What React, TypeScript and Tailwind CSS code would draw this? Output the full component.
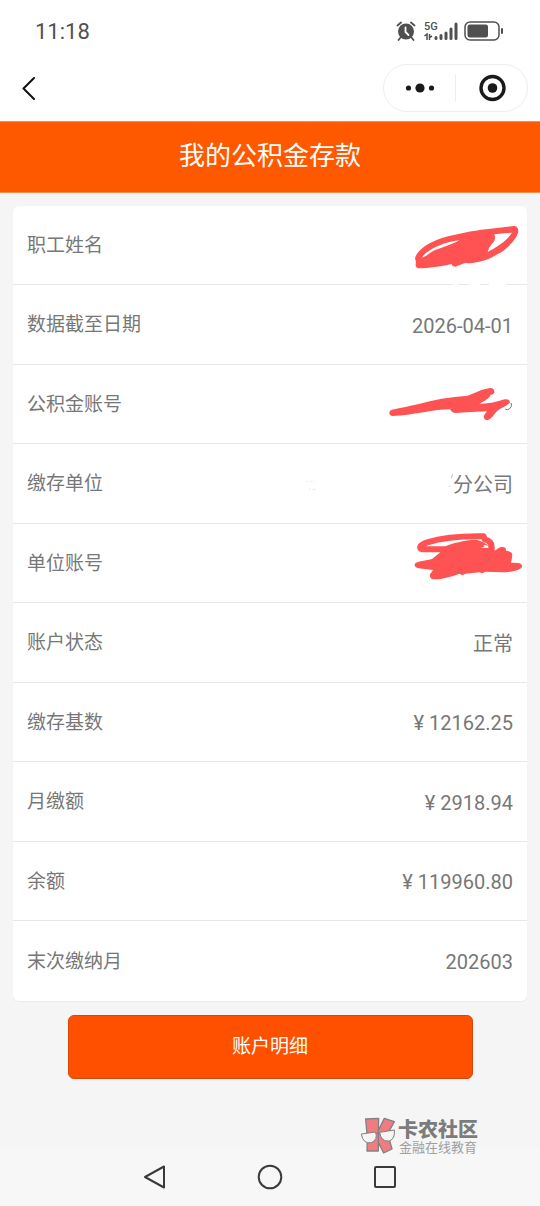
import type { ReactNode } from "react";

type Row = {
  label: string;
  value?: string;
  mark?: ReactNode;
};

const NameMark = () => (
  <svg
    className="absolute right-0 top-0 z-10 h-[85px] w-[140px]"
    viewBox="21 -12 420 255"
    aria-hidden="true"
  >
    <path
      fill="#ff5252"
      fillRule="evenodd"
      d="M105 145C110 122 142 99 186 84C226 73 280 62 318 58L400 48C410 47 416 55 415 66C408 91 378 120 352 133C326 149 292 162 255 159L226 170Q217 171 215 162C181 170 145 174 117 175Q106 174 107 162Q109 155 105 145ZM126 143C149 135 148 124 183 114C204 106 222 101 238 91C207 94 176 105 151 120Q133 130 126 143ZM343 73Q350 89 335 103Q326 112 323 126C352 110 381 92 396 68Z"
    />
    <path
      stroke="#fff"
      strokeWidth="8"
      strokeLinecap="round"
      d="M222 223h7M273 223h24M331 223h42"
    />
  </svg>
);

const AccountMark = () => (
  <svg
    className="absolute right-0 top-0 h-20 w-[140px]"
    viewBox="21 -15 420 240"
    aria-hidden="true"
  >
    <path
      fill="#ff5252"
      d="M36 119C93 108 136 96 185 86Q226 80 262 77C286 70 304 56 333 54Q344 56 343 68Q340 75 332 74Q330 85 298 101C323 102 347 97 374 88Q388 85 390 97Q387 104 359 117C343 127 338 148 320 151Q308 146 313 134L321 124Q275 126 225 129Q214 127 210 118C155 119 98 136 38 138Q28 136 28 128Q28 121 36 119Z"
    />
    <path
      fill="none"
      stroke="#777"
      strokeWidth="3"
      d="M394 99Q397 111 388 117Q382 121 376 118"
    />
  </svg>
);

const CompanyMark = () => (
  <svg
    className="absolute right-0 top-0 h-[79px] w-60"
    viewBox="-9 -45 720 237"
    aria-hidden="true"
  >
    <path
      fill="none"
      stroke="#ddd"
      strokeWidth="2"
      d="M48 67h4M60 67h4M70 68h4M58 91h5M68 91h8"
    />
    <path
      fill="none"
      stroke="#bbb"
      strokeWidth="3"
      d="M488 46L484 57M478 82h3"
    />
  </svg>
);

const CompanyAccountMark = () => (
  <svg
    className="absolute right-0 top-0 h-20 w-[140px]"
    viewBox="-39 12 420 240"
    aria-hidden="true"
  >
    <path
      fill="#ff5252"
      d="M44 133C47 124 73 123 96 117L121 97L118 84L132 80C157 69 193 61 225 59C250 62 270 78 284 92L300 82Q319 78 318 92L326 94Q337 97 337 107L333 128L356 129Q367 131 366 141C360 151 334 157 306 157L256 155L247 160L238 157L196 161L187 166L179 161C154 169 127 179 99 178Q88 174 90 163L99 150L56 145Q43 142 44 133Z"
    />
    <path
      fill="none"
      stroke="#ff5252"
      strokeWidth="18"
      strokeLinecap="round"
      strokeLinejoin="round"
      d="M130 88H68C52 86 62 73 82 67C130 52 190 48 251 49L254 58Q275 63 275 80V95"
    />
    <path
      fill="#fff"
      d="M240 83L265 84Q267 73 250 75L254 78Q248 83 240 83Z"
    />
    <path fill="#a66" d="M269 112L260 123L267 122Z" />
  </svg>
);

const rows: Row[] = [
  { label: "职工姓名", mark: <NameMark /> },
  { label: "数据截至日期", value: "2026-04-01" },
  { label: "公积金账号", mark: <AccountMark /> },
  { label: "缴存单位", value: "分公司", mark: <CompanyMark /> },
  { label: "单位账号", mark: <CompanyAccountMark /> },
  { label: "账户状态", value: "正常" },
  { label: "缴存基数", value: "¥ 12162.25" },
  { label: "月缴额", value: "¥ 2918.94" },
  { label: "余额", value: "¥ 119960.80" },
  { label: "末次缴纳月", value: "202603" },
];

const StatusBar = () => (
  <div className="flex h-16 items-center justify-between pb-[2px] pl-[35px] pr-9 text-[22px] text-[#505050]">
    <span>11:18</span>
    <div className="flex items-center">
      <svg
        className="mr-2 h-5 w-5"
        viewBox="0 0 20 20"
        fill="none"
        aria-label="闹钟"
      >
        <circle cx="10" cy="10.5" r="8" fill="#505050" />
        <path
          stroke="#505050"
          strokeWidth="1.8"
          strokeLinecap="round"
          d="M1.5 4.5L5 1.5M18.5 4.5L15 1.5M4.5 16.5L2.5 19M15.5 16.5L17.5 19"
        />
        <path
          stroke="#fff"
          strokeWidth="1.8"
          strokeLinecap="round"
          strokeLinejoin="round"
          d="M9.5 6.5v4.5l3 3"
        />
      </svg>
      <div className="relative mr-[6px] h-5 w-[34px]">
        <span className="absolute left-0 top-0 text-[11px] font-medium leading-[11px]">
          5G
        </span>
        <svg className="h-5 w-[34px]" viewBox="0 0 34 20" aria-label="信号">
          <path
            stroke="#505050"
            strokeWidth="3"
            strokeLinecap="round"
            d="M12 16.5v1M17 14.5v3M22 12v5.5M27 8v9.5M32 3v14.5"
          />
          <path
            fill="none"
            stroke="#505050"
            strokeWidth="1.5"
            d="M.5 15L3 13v6M5.5 13v6M5.5 16.5L8 15"
          />
        </svg>
      </div>
      <svg
        className="h-5 w-10"
        viewBox="0 0 40 20"
        fill="none"
        aria-label="电量"
      >
        <rect
          x="1"
          y="1"
          width="34"
          height="18"
          rx="5"
          stroke="#505050"
          strokeWidth="1.5"
        />
        <rect x="3.5" y="3.5" width="20.5" height="13" rx="2.5" fill="#505050" />
        <path
          stroke="#505050"
          strokeWidth="2"
          strokeLinecap="round"
          d="M38 8v4"
        />
      </svg>
    </div>
  </div>
);

const NavBar = () => (
  <div className="flex items-center justify-between pb-[9px] pl-[18px] pr-3">
    <button type="button" aria-label="返回">
      <svg className="h-6 w-6" viewBox="0 0 24 24" fill="none">
        <path
          stroke="#111"
          strokeWidth="2"
          strokeLinecap="round"
          strokeLinejoin="round"
          d="M16 2L5.5 12.5L16 23"
        />
      </svg>
    </button>
    <div className="flex h-12 w-[145px] items-center rounded-full border border-[#eee]">
      <button
        type="button"
        aria-label="更多"
        className="flex flex-1 justify-center"
      >
        <svg className="h-3 w-8" viewBox="0 0 32 12" fill="#1a1a1a">
          <circle cx="4.5" cy="6" r="2.6" />
          <circle cx="16" cy="6" r="4.6" />
          <circle cx="27.5" cy="6" r="2.6" />
        </svg>
      </button>
      <div className="h-7 w-px bg-[#eee]" />
      <button
        type="button"
        aria-label="关闭"
        className="flex flex-1 justify-center"
      >
        <svg className="h-7 w-7" viewBox="0 0 28 28" fill="none">
          <circle cx="14.5" cy="14" r="11.5" stroke="#1a1a1a" strokeWidth="3.4" />
          <circle cx="14.5" cy="14" r="4.8" fill="#1a1a1a" />
        </svg>
      </button>
    </div>
  </div>
);

const Watermark = () => (
  <div className="pointer-events-none absolute bottom-[51px] right-[62px] flex items-center gap-[2px]">
    <svg className="h-[38px] w-9" viewBox="28 38 108 114" aria-hidden="true">
      <g
        fill="#ef7d80"
        stroke="#858080"
        strokeWidth="4"
        strokeLinejoin="round"
      >
        <path d="M45 44L84 42L83 78L101 42L131 52L111 88L124 134L99 146L83 114L83 140L49 140L50 100Z" />
        <path fill="none" d="M83 78V114" />
      </g>
      <g fill="#f5f5f5" stroke="#858080" strokeWidth="3">
        <path d="M32 89L75 83Q82 107 62 115Q37 120 32 89Z" />
        <path d="M87 84L131 77Q134 103 116 110Q91 113 87 84Z" />
        <path fill="none" d="M75 88Q81 84 87 88" />
      </g>
    </svg>
    <div className="flex flex-col">
      <span className="text-[20px] font-black leading-[22px] text-[#7c7c7c]">
        卡农社区
      </span>
      <span className="pl-px text-[13px] leading-[13px] text-[#a0a0a0]">
        金融在线教育
      </span>
    </div>
  </div>
);

const SystemNav = () => (
  <nav className="flex h-[58px] items-center justify-center gap-[87px] bg-[#f7f7f7]">
    <button type="button" aria-label="返回上一页">
      <svg className="h-7 w-7" viewBox="0 0 28 28" fill="none">
        <path
          stroke="#3a3a3a"
          strokeWidth="2"
          strokeLinejoin="round"
          d="M23 3.5V24.5L4 14Z"
        />
      </svg>
    </button>
    <button type="button" aria-label="主屏幕">
      <svg className="h-7 w-7" viewBox="0 0 28 28" fill="none">
        <circle cx="14" cy="14" r="11.3" stroke="#3a3a3a" strokeWidth="2" />
      </svg>
    </button>
    <button type="button" aria-label="最近任务">
      <svg className="h-7 w-7" viewBox="0 0 28 28" fill="none">
        <rect
          x="4"
          y="4"
          width="20"
          height="20"
          rx="1"
          stroke="#3a3a3a"
          strokeWidth="2"
        />
      </svg>
    </button>
  </nav>
);

export default function App() {
  return (
    <div className="relative flex min-h-screen flex-col bg-[#f5f5f5] font-[Roboto,'Noto_Sans_CJK_SC',sans-serif]">
      <header className="bg-white">
        <StatusBar />
        <NavBar />
      </header>
      <h1 className="flex h-[72px] items-center justify-center border-y border-[#ff8a4d] bg-[#ff5900] pb-[2px] text-[26px] text-white">
        我的公积金存款
      </h1>
      <main className="flex flex-1 flex-col px-[13px] pt-[13px]">
        <dl className="rounded-md bg-white shadow-[0_1px_1px_#ececec]">
          {rows.map((row) => (
            <div
              key={row.label}
              className="relative flex items-center justify-between border-b border-[#e8e8e8] px-[14px] pt-[2px] text-[#777] odd:h-[79px] even:h-20 last:border-b-0"
            >
              <dt className="text-[19px]">{row.label}</dt>
              <dd className="text-[20px]">
                {row.value}
                {row.mark}
              </dd>
            </div>
          ))}
        </dl>
        <button
          type="button"
          className="mx-auto mt-[14px] h-16 w-[405px] max-w-full rounded-md border border-[#d9480a] bg-[#ff5000] text-[19px] text-white"
        >
          账户明细
        </button>
      </main>
      <SystemNav />
      <Watermark />
    </div>
  );
}
